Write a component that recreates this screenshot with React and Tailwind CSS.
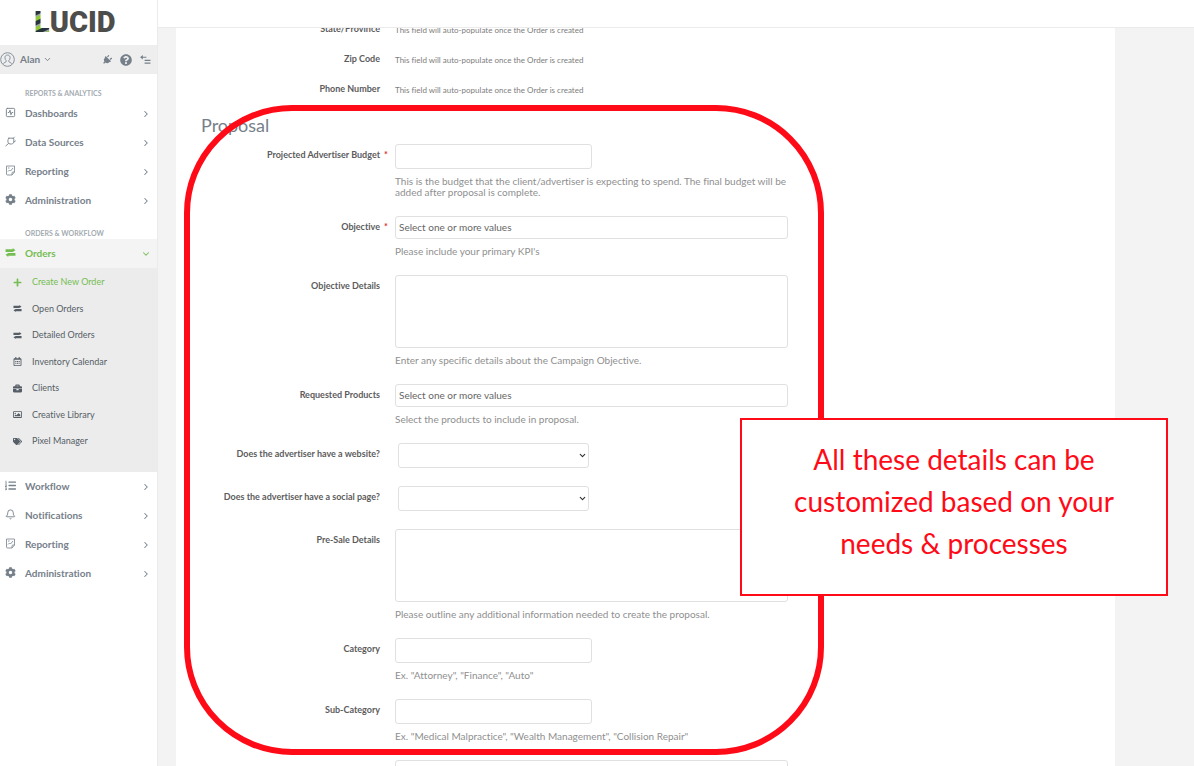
import React, { useState } from 'react';
import { SquareActivity, Bell, ChevronRight, ChevronDown } from 'lucide-react';
import { FaPlug, FaQuestionCircle, FaCog, FaPlus, FaRegCalendarAlt, FaBriefcase, FaRegImage, FaTags, FaListOl } from 'react-icons/fa';

const PlugOutline = ({ className }) => (
    <svg className={className} viewBox="0 0 20 20" fill="none" stroke="currentColor" strokeWidth="1.6" strokeLinecap="round" strokeLinejoin="round">
        <path d="M7 4h8l1 1v7c-2.500 3-6.500 3.500-9 1.500S4.500 7 7 4z" />
        <path d="M6.500 13.500 1.500 18M14 5l3-3M16 11l3-2" />
    </svg>
);

const ReportIcon = ({ className }) => (
    <svg className={className} viewBox="0 0 20 22" fill="none" stroke="currentColor" strokeWidth="1.6" strokeLinejoin="round">
        <path d="M2 2h16v12l-5 6H4a2 2 0 0 1-2-2z" />
        <path d="M13 20v-4a2 2 0 0 1 2-2h3M5 6h3M5 13l3-3 2 2 5-6" />
    </svg>
);

const SwapIcon = ({ className }) => (
    <svg className={className} viewBox="0 0 20 18" fill="currentColor">
        <path d="M1 3h13V1l5 4-5 3H1zM19 15H6v2l-5-4 5-3h13z" />
    </svg>
);

const UserIcon = ({ className }) => (
    <svg className={className} viewBox="0 0 32 32" fill="none" stroke="currentColor" strokeWidth="1.8">
        <circle cx="16" cy="16" r="14.500" />
        <path d="M16 6.500c-3.600 0-5.500 2.500-5.500 5.800 0 2.800 1.200 4.600 2.700 6v2.200L7 24.500M16 6.500c3.600 0 5.500 2.500 5.500 5.800 0 2.800-1.200 4.600-2.700 6v2.200l6.200 4" />
    </svg>
);

const CollapseIcon = ({ className }) => (
    <svg className={className} viewBox="0 0 24 20" fill="none" stroke="currentColor" strokeWidth="2.400">
        <path d="M2 5h12M10 12h13M10 18h13" />
        <path d="M6 0v10L0 5z" fill="currentColor" stroke="none" />
    </svg>
);

const reportLinks = [
    { label: 'Dashboards', icon: SquareActivity },
    { label: 'Data Sources', icon: PlugOutline },
    { label: 'Reporting', icon: ReportIcon },
    { label: 'Administration', icon: FaCog },
];

const orderLinks = [
    { label: 'Create New Order', icon: FaPlus, active: true },
    { label: 'Open Orders', icon: SwapIcon },
    { label: 'Detailed Orders', icon: SwapIcon },
    { label: 'Inventory Calendar', icon: FaRegCalendarAlt },
    { label: 'Clients', icon: FaBriefcase },
    { label: 'Creative Library', icon: FaRegImage },
    { label: 'Pixel Manager', icon: FaTags },
];

const workflowLinks = [
    { label: 'Workflow', icon: FaListOl },
    { label: 'Notifications', icon: Bell },
    { label: 'Reporting', icon: ReportIcon },
    { label: 'Administration', icon: FaCog },
];

const NavLink = ({ label, icon: Icon, open }) => (
    <a href="#" className={`flex h-[29px] items-center pl-[5px] pr-[6px] text-[10px] font-bold ${open ? 'bg-[#f4f4f4] text-[#74bd52]' : 'text-[#76808a]'}`}>
        <Icon className="mb-[3px] h-[11px] w-[11px] shrink-0" />
        <span className="ml-[9px] flex-1">{label}</span>
        {open ? <ChevronDown className="h-[10px] w-[10px]" strokeWidth={2.5} /> : <ChevronRight className="h-[10px] w-[10px]" strokeWidth={2.5} />}
    </a>
);

const NavHeading = ({ children }) => (
    <h2 className="flex h-6 items-end pb-px pl-[25px] text-[7px] font-bold leading-[9px] text-[#a4abb1]">{children}</h2>
);

const Sidebar = () => (
    <aside className="w-[158px] shrink-0 border-r border-[#ebebeb] bg-white">
        <div className="flex h-[45px] items-center pl-[34px] font-['Roboto',sans-serif] text-[29px] font-black leading-none text-[#4d4d4b]">
            <span className="bg-[repeating-linear-gradient(155deg,#8fc93a_0px,#8fc93a_3px,#26323c_4px,#26323c_7px,#9aa5a0_8px,#9aa5a0_9px)] bg-clip-text text-transparent">L</span>
            <span>UCID</span>
        </div>
        <div className="flex h-[29px] items-center bg-[#eeeeee] pr-[6px] text-[#76808a]">
            <button type="button" className="flex items-center text-[10px] font-bold">
                <UserIcon className="h-[15px] w-[15px]" />
                <span className="ml-[5px]">Alan</span>
                <ChevronDown className="ml-[3px] h-[9px] w-[9px]" strokeWidth={2.5} />
            </button>
            <div className="ml-auto flex items-center gap-2">
                <button type="button" aria-label="Connections"><FaPlug className="h-[10px] w-[10px] rotate-45" /></button>
                <button type="button" aria-label="Help"><FaQuestionCircle className="h-3 w-3" /></button>
                <button type="button" aria-label="Collapse menu"><CollapseIcon className="h-[9px] w-[11px]" /></button>
            </div>
        </div>
        <nav className="pt-px">
            <NavHeading>REPORTS &amp; ANALYTICS</NavHeading>
            {reportLinks.map((link) => <NavLink key={link.label} {...link} />)}
            <NavHeading>ORDERS &amp; WORKFLOW</NavHeading>
            <NavLink label="Orders" icon={SwapIcon} open />
            <ul className="flex h-[204px] flex-col justify-between bg-[#ececec] pb-[23px] pt-[6px]">
                {orderLinks.map(({ label, icon: Icon, active }) => (
                    <li key={label}>
                        <a href="#" className={`flex h-4 items-center pl-[13px] text-[9px] ${active ? 'text-[#74bd52]' : 'text-[#555e66]'}`}>
                            <Icon className="h-[9px] w-[9px] shrink-0" />
                            <span className="ml-[10px]">{label}</span>
                        </a>
                    </li>
                ))}
            </ul>
            {workflowLinks.map((link) => <NavLink key={link.label} {...link} />)}
        </nav>
    </aside>
);

const controlBase = 'block rounded-[3px] border border-[#e0e0e0] bg-white px-[3px] text-[10px] text-[#666666] outline-none';

const Control = ({ id, type, ...rest }) => {
    if (type === 'textarea') return <textarea id={id} className={`${controlBase} h-[73px] w-full resize-none`} {...rest} />;
    if (type === 'multi') return <input id={id} type="text" placeholder="Select one or more values" className={`${controlBase} h-[23px] w-full pb-[2px] placeholder:text-[#666666]`} {...rest} />;
    if (type === 'select') {
        return (
            <div className="relative mx-[3px] w-[191px]">
                <select id={id} className={`${controlBase} h-[25px] w-full appearance-none`} {...rest}>
                    <option value=""></option>
                    <option>Yes</option>
                    <option>No</option>
                </select>
                <ChevronDown className="pointer-events-none absolute right-[2px] top-2 h-[9px] w-[9px] text-[#333333]" strokeWidth={3} />
            </div>
        );
    }
    return <input id={id} type="text" className={`${controlBase} h-[25px] w-[197px]`} {...rest} />;
};

const fields = [
    { id: 'budget', label: 'Projected Advertiser Budget', type: 'text', required: true, help: 'This is the budget that the client/advertiser is expecting to spend. The final budget will be added after proposal is complete.' },
    { id: 'objective', label: 'Objective', type: 'multi', required: true, help: "Please include your primary KPI's" },
    { id: 'objective-details', label: 'Objective Details', type: 'textarea', help: 'Enter any specific details about the Campaign Objective.' },
    { id: 'products', label: 'Requested Products', type: 'multi', help: 'Select the products to include in proposal.' },
    { id: 'website', label: 'Does the advertiser have a website?', type: 'select' },
    { id: 'social', label: 'Does the advertiser have a social page?', type: 'select' },
    { id: 'presale', label: 'Pre-Sale Details', type: 'textarea', help: 'Please outline any additional information needed to create the proposal.' },
    { id: 'category', label: 'Category', type: 'text', help: 'Ex. "Attorney", "Finance", "Auto"' },
    { id: 'sub-category', label: 'Sub-Category', type: 'text', help: 'Ex. "Medical Malpractice", "Wealth Management", "Collision Repair"' },
    { id: 'notes', type: 'textarea' },
];

const FieldRow = ({ field, value, onChange }) => (
    <div className="mb-[18px] flex items-start">
        <div className="flex w-[194px] shrink-0 pt-1">
            {field.label && <label htmlFor={field.id} className="flex-1 whitespace-nowrap text-right text-[9px] font-bold leading-[13px] text-[#5c5c5c]">{field.label}</label>}
            <span className="w-[15px] pl-1 text-[9px] font-bold leading-[13px] text-[#e02b2b]">{field.required && '*'}</span>
        </div>
        <div className="w-full max-w-[393px]">
            <Control id={field.id} type={field.type} value={value} onChange={onChange} aria-label={field.label ? undefined : 'Notes'} />
            {field.help && <p className="mt-[7px] text-[10px] leading-[11px] text-[#8f8f8f]">{field.help}</p>}
        </div>
    </div>
);

const App = () => {
    const [values, setValues] = useState({});

    return (
        <div className="relative flex h-screen overflow-hidden bg-[#f3f3f3] font-['Lato','Open_Sans',sans-serif] [font-variant-ligatures:none]">
            <Sidebar />
            <div className="flex min-w-0 flex-1 flex-col">
                <header className="h-7 shrink-0 border-b border-[#ebebeb] bg-white" />
                <main className="ml-[18px] mr-[79px] flex-1 overflow-hidden bg-white pl-[25px]">
                    <dl className="-mt-[14px]">
                        {['State/Province', 'Zip Code', 'Phone Number'].map((label) => (
                            <div key={label} className="flex h-[30px] items-center">
                                <dt className="w-[179px] text-right text-[9px] font-bold text-[#5c5c5c]">{label}</dt>
                                <dd className="ml-[15px] pt-px text-[8px] text-[#7d7d7d]">This field will auto-populate once the Order is created</dd>
                            </div>
                        ))}
                    </dl>
                    <form>
                        <h1 className="mb-[7px] mt-[9px] text-[18px] leading-6 text-[#76808a]">Proposal</h1>
                        {fields.map((field) => (
                            <FieldRow
                                key={field.id}
                                field={field}
                                value={values[field.id] || ''}
                                onChange={(e) => setValues({ ...values, [field.id]: e.target.value })}
                            />
                        ))}
                    </form>
                </main>
            </div>

            {/* annotation drawn over the form */}
            <div className="pointer-events-none absolute left-[184px] top-[105px] h-[650px] w-[640px] rounded-[108px] border-[6px] border-[#ff0a17]" />
            <p className="absolute left-[740px] top-[418px] w-[428px] border-2 border-[#ff0a17] bg-white px-10 pb-[30px] pt-[18px] text-center text-[28px] leading-[42px] text-[#ff0a17]">
                All these details can be customized based on your needs &amp; processes
            </p>
        </div>
    );
};

export default App;
